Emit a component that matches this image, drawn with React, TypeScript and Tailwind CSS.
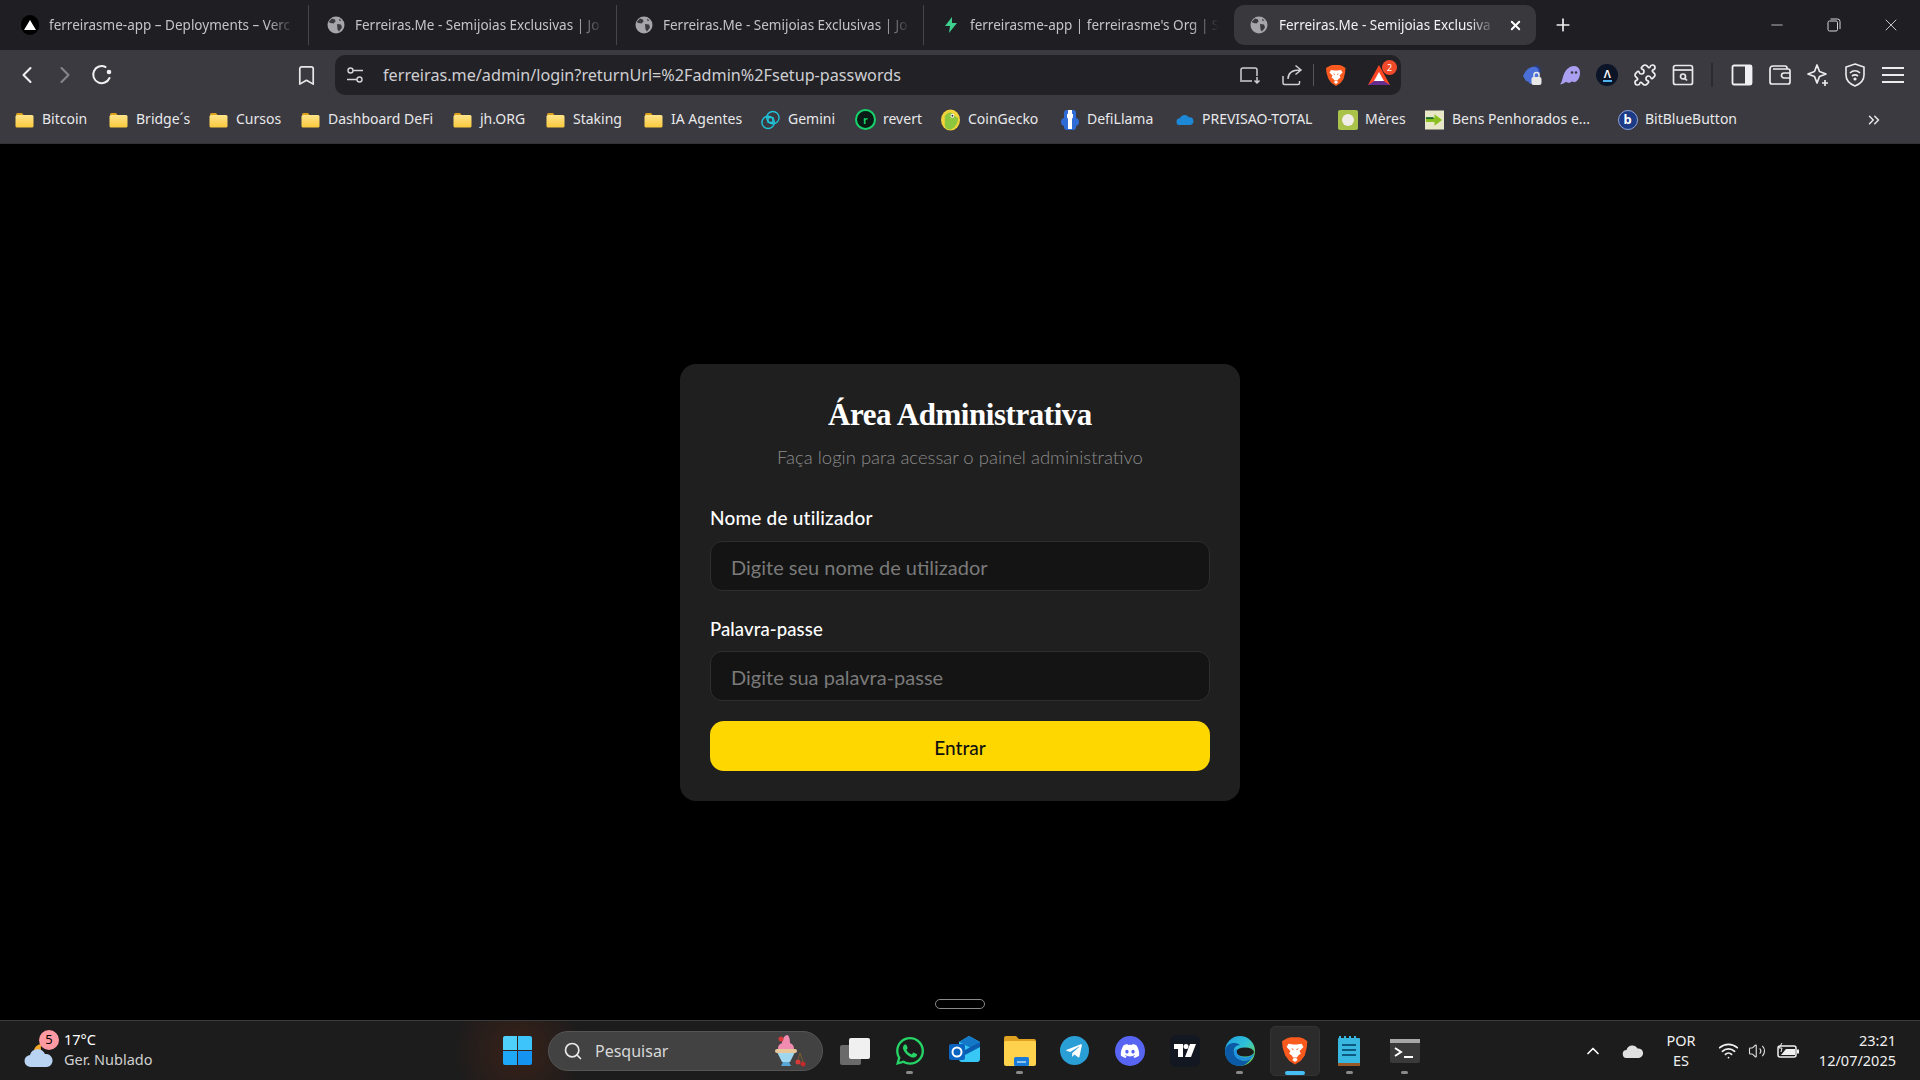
import React from "react";
import { FaWhatsapp, FaDiscord, FaTelegramPlane } from "react-icons/fa";
import { ChevronLeft, ChevronRight, Bookmark, Plus, X, Minus, Puzzle, ChevronUp, ChevronsRight, Search, Wifi, Volume2 } from "lucide-react";

const Globe = () => (
  <svg width="18" height="18" viewBox="0 0 18 18">
    <circle cx="9" cy="9" r="8.500" fill="#a6a6aa" />
    <path d="M5 2.500l3 1 .5 2-2 2-3-.5-2-1zM10 8l4 .5 1 3-3 4-1.500-2zM12 2.500l2.500 2-2 .5z" fill="#3a3a40" />
  </svg>
);
const Folder = () => (
  <svg width="19" height="16" viewBox="0 0 19 16">
    <defs>
      <linearGradient id="fg" x1="0" y1="0" x2="0" y2="1"><stop offset="0" stopColor="#ffe48a" /><stop offset="1" stopColor="#fac83c" /></linearGradient>
    </defs>
    <path d="M1 2.500A1.500 1.500 0 0 1 2.500 1h4.500l1.500 2H1z" fill="#dc9f1a" />
    <rect x="0.500" y="3" width="18" height="12.500" rx="1.500" fill="url(#fg)" />
  </svg>
);
const BraveLion = ({ s = 20 }: { s?: number }) => (
  <svg width={s} height={s * 1.15} viewBox="0 0 20 23">
    <path d="M3.500 2L6.500 1h7l3 1 3 2-.5 5-1.500 6-3 4-4.500 3-4.500-3-3-4L.5 9 0 4z" fill="#fb5a1f" />
    <path d="M5 6l3.500.5h3L15 6l1.500 2.500-3 3 1 2-2 1.500-1 1.500h-3L7.500 15l-2-1.500 1-2-3-3z" fill="#fff" />
    <path d="M9 17h2l1 1.500-2 1.500-2-1.500z" fill="#fff" />
    <path d="M7 9.500l2 .5-.5 1zM13 9.500l-2 .5.5 1z" fill="#fb5a1f" />
  </svg>
);
const BatToken = () => (
  <svg width="24" height="22" viewBox="0 0 24 22">
    <path d="M12 1l11 20H1z" fill="#ff4724" />
    <path d="M1 21l11-7 11 7z" fill="#662d91" />
    <path d="M12 8l5 9H7z" fill="#fff" />
  </svg>
);

const Tab = ({ icon, text, w, sep = true }: { icon: React.ReactNode; text: string; w: string; sep?: boolean }) => (
  <div className={`flex h-10 shrink-0 items-center ${w} ${sep ? "border-r border-[#45454a]" : ""}`}>
    <div className="flex w-[18px] shrink-0 items-center justify-center">{icon}</div>
    <span className="ml-[10px] flex-1 whitespace-nowrap text-[13.500px] text-[#c4c4c8] [mask-image:linear-gradient(to_right,black_88%,transparent)]">{text}</span>
    <div className="w-[12px] shrink-0" />
  </div>
);

const Slot = ({ children, w = "w-[37.700px]" }: { children: React.ReactNode; w?: string }) => (
  <div className={`flex shrink-0 items-center justify-center ${w}`}>{children}</div>
);

const BookmarkItem = ({ icon, text, w }: { icon: React.ReactNode; text: string; w: string }) => (
  <div className={`flex shrink-0 items-center ${w}`}>
    <div className="flex w-[19px] shrink-0 items-center justify-center">{icon}</div>
    <span className="ml-[8px] mt-[-2px] whitespace-nowrap text-[14px] text-[#e8e8ea]">{text}</span>
  </div>
);

const TaskSlot = ({ children, dot, active }: { children: React.ReactNode; dot?: boolean; active?: boolean }) => (
  <div className="relative flex h-[50px] w-[55px] shrink-0 items-center justify-center">
    {active && <div className="absolute left-[2.500px] top-0 h-[50px] w-[50px] rounded-[5px] border border-[#333] bg-[#2b2b2b]" />}
    <div className="relative">{children}</div>
    {dot && <div className="absolute bottom-[2px] left-[24px] h-[3px] w-[7px] rounded-full bg-[#8a8a8a]" />}
    {active && <div className="absolute bottom-[1px] left-[17.500px] h-[4px] w-[20px] rounded-full bg-[#47bdf5]" />}
  </div>
);

export default function App() {
  return (
    <div className="flex h-[1080px] w-[1920px] flex-col overflow-hidden bg-black font-['Noto_Sans',sans-serif]">
      {/* tab strip */}
      <div className="flex h-[50px] shrink-0 items-center bg-[#1e1e23] pl-[21px]">
        <Tab w="w-[288px]" text="ferreirasme-app – Deployments – Verc" icon={
          <div className="flex h-[20px] w-[20px] items-center justify-center rounded-full bg-black"><div className="h-0 w-0 border-x-[6px] border-b-[10px] border-x-transparent border-b-white" /></div>} />
        <div className="w-[18px]" />
        <Tab w="w-[290px]" text="Ferreiras.Me - Semijoias Exclusivas | Jo" icon={<Globe />} />
        <div className="w-[18px]" />
        <Tab w="w-[289px]" text="Ferreiras.Me - Semijoias Exclusivas | Jo" icon={<Globe />} />
        <div className="w-[18px]" />
        <Tab w="w-[288px]" sep={false} text="ferreirasme-app | ferreirasme's Org | S" icon={
          <svg width="18" height="18" viewBox="0 0 18 18"><path d="M10 1L3 10h5l-1 7 8-10h-5z" fill="#3ecf8e" /></svg>} />
        <div className="ml-[4px] flex h-10 w-[302px] shrink-0 items-center rounded-[10px] bg-[#38383d] pl-[16px]">
          <Globe />
          <span className="ml-[11px] w-[217px] whitespace-nowrap text-[13.500px] text-[#f2f2f4] [mask-image:linear-gradient(to_right,black_88%,transparent)]">Ferreiras.Me - Semijoias Exclusiva</span>
          <X size={15} strokeWidth={3} className="ml-[12px] text-white" />
        </div>
        <Plus size={20} strokeWidth={2} className="ml-[17px] text-[#f0f0f0]" />
        <div className="flex-1" />
        <Minus size={18} strokeWidth={1} className="mr-[41px] text-[#e8e8e8]" />
        <svg width="14" height="14" viewBox="0 0 14 14" fill="none" stroke="#d8d8d8" className="mr-[40px]"><rect x="1" y="3" width="9.500" height="10" rx="1.500" /><path d="M3.500 1h7A2.500 2.500 0 0 1 13 3.500V11" /></svg>
        <X size={20} strokeWidth={1} className="mr-[19px] text-[#e8e8e8]" />
      </div>

      {/* toolbar */}
      <div className="flex h-[50px] shrink-0 items-center bg-[#3a3a40] pl-[8px]">
        <Slot w="w-[38px]"><ChevronLeft size={28} strokeWidth={1.800} className="text-[#f0f0f2]" /></Slot>
        <Slot w="w-[38px]"><ChevronRight size={28} strokeWidth={1.800} className="text-[#86868a]" /></Slot>
        <Slot w="w-[36px]">
          <svg width="22" height="22" viewBox="0 0 22 22" fill="none" stroke="#f0f0f2" strokeWidth="2"><path d="M18.500 14A8.500 8.500 0 1 1 14.500 3" strokeLinecap="round" /><circle cx="18" cy="8" r="2.300" fill="#f0f0f2" stroke="none" /></svg>
        </Slot>
        <div className="ml-[168px]"><Slot w="w-[36px]"><Bookmark size={23} strokeWidth={1.800} className="text-[#e8e8ea]" /></Slot></div>
        <div className="ml-[11px] flex h-10 w-[1066px] shrink-0 items-center rounded-[10px] bg-[#222226] pl-[11px] pr-[10px]">
          <svg width="18" height="18" viewBox="0 0 18 18" fill="none" stroke="#d4d4d8" strokeWidth="1.400"><circle cx="4.500" cy="4.500" r="2.500" /><path d="M7 4.500h10M1 13.500h10" /><circle cx="13.500" cy="13.500" r="2.500" /></svg>
          <span className="ml-[19px] text-[16.200px] text-[#cfcfd3]">ferreiras.me/admin/login?returnUrl=%2Fadmin%2Fsetup-passwords</span>
          <div className="flex-1" />
          <svg width="22" height="20" viewBox="0 0 22 20" fill="none" stroke="#d0d0d4" strokeWidth="1.500" className="mr-[20px]"><path d="M2 15V5a2 2 0 0 1 2-2h12a2 2 0 0 1 2 2v6" /><path d="M1 16h12M18 12v6m-2.500-2.500L18 18l2.500-2.500" /></svg>
          <svg width="22" height="22" viewBox="0 0 22 22" fill="none" stroke="#d0d0d4" strokeWidth="1.500" className="mr-[10px]"><path d="M2 12v7a1.500 1.500 0 0 0 1.500 1.500H17a1.500 1.500 0 0 0 1.500-1.500v-2" /><path d="M7 15c0-6 4-9 12-9M14.500 1.500L20 6l-5.500 4.500" /></svg>
          <div className="h-[22px] w-px bg-[#55555a]" />
          <div className="ml-[12px]"><BraveLion s={20} /></div>
          <div className="relative ml-[21px]">
            <BatToken />
            <div className="absolute right-[-6px] top-[-4px] flex h-[15px] w-[15px] items-center justify-center rounded-full bg-[#f04a2a] text-[9px] text-white">2</div>
          </div>
        </div>
        <div className="ml-[112px] flex items-center">
          <Slot>
            <svg width="24" height="24" viewBox="0 0 24 24"><path d="M3 13c3-7 8-10 13-9 3 1 4 3 4 6l-4 9-6 2c-1-2-2-3-4-3z" fill="#4a6fd8" /><path d="M15 3c3 0 5 3 5 6" stroke="#2a3f8c" strokeWidth="2" fill="none" /><rect x="11.500" y="14" width="10" height="8" rx="2" fill="#e8e8e8" /><path d="M14 14v-2a2.500 2.500 0 0 1 5 0v2" stroke="#e8e8e8" strokeWidth="1.500" fill="none" /></svg>
          </Slot>
          <Slot>
            <svg width="22" height="20" viewBox="0 0 22 20"><path d="M1 19c2-1 2-5 4-10S11 1 15 1s6 3 6 7-2 8-5 9c-1 .5-2-.5-3-.5s-2 1.500-3 1.500-2-1-3-1-3 3-6 2z" fill="#ab9ff2" /><circle cx="13" cy="7.500" r="1.300" fill="#3a3a40" /><circle cx="17" cy="7.500" r="1.300" fill="#3a3a40" /></svg>
          </Slot>
          <Slot>
            <div className="flex h-[22px] w-[22px] flex-col items-center justify-center rounded-full bg-[#0c1428]">
              <span className="text-[11px] font-semibold leading-[12px] text-white">Λ</span>
              <div className="h-[1.500px] w-[9px] bg-[#4db4f0]" />
            </div>
          </Slot>
          <Slot><Puzzle size={24} strokeWidth={1.700} className="text-[#eeeeee]" /></Slot>
          <Slot>
            <svg width="22" height="22" viewBox="0 0 22 22" fill="none" stroke="#e8e8ea" strokeWidth="1.700"><rect x="1.500" y="1.500" width="19" height="19" rx="2" /><path d="M1.500 6h19" /><circle cx="11" cy="12.500" r="2.500" /><path d="M13 14.500l2 2" /></svg>
          </Slot>
          <div className="flex w-[22px] shrink-0 justify-center"><div className="h-[24px] w-[2px] bg-[#2c2c30]" /></div>
          <Slot>
            <svg width="22" height="22" viewBox="0 0 22 22"><rect x="1.500" y="1.500" width="19" height="19" rx="1.500" fill="none" stroke="#f0f0f2" strokeWidth="1.800" /><rect x="14" y="1.500" width="6.500" height="19" fill="#f0f0f2" /></svg>
          </Slot>
          <Slot>
            <svg width="22" height="20" viewBox="0 0 22 20" fill="none" stroke="#ececee" strokeWidth="1.700"><path d="M18 4V3a2 2 0 0 0-2-2H4a3 3 0 0 0-3 3v13a2 2 0 0 0 2 2h16a2 2 0 0 0 2-2V6a2 2 0 0 0-2-2H4" /><path d="M21 8h-6a2 2 0 0 0 0 5h6" /></svg>
          </Slot>
          <Slot>
            <svg width="24" height="24" viewBox="0 0 24 24" fill="none" stroke="#ececee" strokeWidth="1.700"><path d="M11 2l2.500 6.500L20 11l-6.500 2.500L11 20l-2.500-6.500L2 11l6.500-2.500z" strokeLinejoin="round" /><path d="M19 17v6M16 20h6" /></svg>
          </Slot>
          <Slot>
            <svg width="20" height="24" viewBox="0 0 20 24" fill="none" stroke="#ececee" strokeWidth="1.600"><path d="M10 1l9 3v8c0 5-4 9-9 11-5-2-9-6-9-11V4z" /><path d="M5 10c3-3 7-3 10 0M7 13c2-1.500 4-1.500 6 0" /><circle cx="10" cy="16" r=".8" fill="#ececee" /></svg>
          </Slot>
          <Slot>
            <svg width="22" height="18" viewBox="0 0 22 18" stroke="#ececee" strokeWidth="1.800"><path d="M0 2h22M0 9h22M0 16h22" /></svg>
          </Slot>
        </div>
      </div>

      {/* bookmarks */}
      <div className="flex h-[44px] shrink-0 items-center border-b border-[#333] bg-[#3a3a40] pb-[4px] pl-[15px]">
        <BookmarkItem w="w-[94px]" text="Bitcoin" icon={<Folder />} />
        <BookmarkItem w="w-[100px]" text="Bridge´s" icon={<Folder />} />
        <BookmarkItem w="w-[92px]" text="Cursos" icon={<Folder />} />
        <BookmarkItem w="w-[152px]" text="Dashboard DeFi" icon={<Folder />} />
        <BookmarkItem w="w-[93px]" text="jh.ORG" icon={<Folder />} />
        <BookmarkItem w="w-[98px]" text="Staking" icon={<Folder />} />
        <BookmarkItem w="w-[117px]" text="IA Agentes" icon={<Folder />} />
        <BookmarkItem w="w-[95px]" text="Gemini" icon={
          <svg width="22" height="22" viewBox="0 0 20 20" fill="none" stroke="#1fc4d8" strokeWidth="1.500"><circle cx="12.500" cy="7.500" r="6.500" /><circle cx="7.500" cy="12.500" r="6.500" /><rect x="7.500" y="7.500" width="5" height="5" /></svg>} />
        <BookmarkItem w="w-[85px]" text="revert" icon={
          <div className="flex h-[21px] w-[21px] shrink-0 items-center justify-center rounded-full border-2 border-[#16d36b] bg-[#0a1a14] text-[10px] font-bold leading-none text-[#16d36b]">r</div>} />
        <BookmarkItem w="w-[119px]" text="CoinGecko" icon={
          <svg width="20" height="22" viewBox="0 0 20 22"><ellipse cx="10" cy="11" rx="10" ry="11" fill="#f2d33a" /><path d="M4 7c3-5 8-5 9-1l5 3c0 6-4 12-9 12-3 0-5-2-5-5z" fill="#8dc63f" /><circle cx="12" cy="6.500" r="2" fill="#fff" /><circle cx="12" cy="6.500" r="1" fill="#333" /></svg>} />
        <BookmarkItem w="w-[115px]" text="DefiLlama" icon={
          <svg width="18" height="22" viewBox="0 0 18 22"><rect x="3" y="1" width="12" height="20" rx="3" fill="#2f6cd6" /><circle cx="4" cy="13" r="4" fill="#2f6cd6" /><circle cx="14" cy="13" r="4" fill="#2f6cd6" /><path d="M7 1v4H6v3l1 2v10h4V10l1-2V5h-1V1z" fill="#fff" /></svg>} />
        <BookmarkItem w="w-[163px]" text="PREVISAO-TOTAL" icon={
          <svg width="22" height="15" viewBox="0 0 22 15"><path d="M6 14a4 4 0 0 1-.5-8A6 6 0 0 1 16 5a4.500 4.500 0 0 1 1.500 9z" fill="#1e88d8" /></svg>} />
        <BookmarkItem w="w-[87px]" text="Mères" icon={
          <div className="flex h-[20px] w-[20px] shrink-0 items-center justify-center rounded-[2px] bg-[#a8c24a]"><div className="h-[12px] w-[12px] rounded-full bg-[#f0ece8]" /></div>} />
        <BookmarkItem w="w-[193px]" text="Bens Penhorados e..." icon={
          <svg width="20" height="20" viewBox="0 0 20 20"><rect width="20" height="20" fill="#e8e8c8" /><path d="M1 8h9V4l8 6-8 6v-4H1z" fill="#8cc020" /><path d="M1 8h8" stroke="#1a6a2a" strokeWidth="2" /></svg>} />
        <BookmarkItem w="w-[247px]" text="BitBlueButton" icon={
          <div className="flex h-[20px] w-[20px] shrink-0 items-center justify-center rounded-full border border-[#8ea4d8] bg-[#1c3a86] text-[13px] font-bold leading-none text-white">b</div>} />
        <ChevronsRight size={18} strokeWidth={2} className="text-[#e8e8ea]" />
      </div>

      {/* page */}
      <main className="relative flex flex-1 items-center justify-center bg-black">
        <div className="flex h-[437px] w-[560px] flex-col rounded-[16px] bg-[#1f1f1f] px-[30px] pt-[30px]">
          <h1 className="mt-[1px] text-center font-['Liberation_Serif',serif] text-[31px] font-bold leading-[40px] tracking-[-0.450px] text-white">Área Administrativa</h1>
          <p className="mt-[10px] text-center font-['Lato',sans-serif] text-[18.500px] font-light leading-[24px] text-[#8c8c8c]">Faça login para acessar o painel administrativo</p>
          <label className="mt-[37px] font-['Lato',sans-serif] text-[19px] font-medium leading-[24px] tracking-[0.2px] text-white">Nome de utilizador</label>
          <input readOnly placeholder="Digite seu nome de utilizador" className="mt-[11px] h-[50px] w-full rounded-[12px] border border-[#2e2e2e] bg-[#141414] px-[20px] pt-[3px] font-['Lato',sans-serif] text-[20px] text-white outline-none placeholder:text-[#7a7a7a]" />
          <label className="mt-[26px] font-['Lato',sans-serif] text-[18.500px] font-medium leading-[24px] tracking-[0.1px] text-white">Palavra-passe</label>
          <input readOnly placeholder="Digite sua palavra-passe" className="mt-[10px] h-[50px] w-full rounded-[12px] border border-[#2e2e2e] bg-[#141414] px-[20px] pt-[3px] font-['Lato',sans-serif] text-[20px] text-white outline-none placeholder:text-[#7a7a7a]" />
          <button className="mt-[20px] flex h-[50px] w-full items-center justify-center rounded-[14px] bg-[#ffd700] pt-[5px] font-['Lato',sans-serif] text-[19px] font-medium text-[#111]">Entrar</button>
        </div>
        <div className="absolute bottom-[11px] left-[935px] h-[10px] w-[50px] rounded-full border border-[#8a8a8a]" />
      </main>

      {/* taskbar */}
      <footer className="flex h-[60px] shrink-0 items-center border-t border-[#3c3c3c] bg-[#1c1c1c] bg-[radial-gradient(circle_at_518px_30px,#3a2118_0,#1c1c1c_65px)]">
        <div className="flex w-[490px] shrink-0 items-center pl-[24px]">
          <div className="relative h-[44px] w-[40px]">
            <svg width="32" height="32" viewBox="0 0 32 32" className="absolute bottom-[3px] left-0"><path d="M10 16a8 8 0 0 1 8-10 8 8 0 0 0 4 12z" fill="#f6a828" /><path d="M7 29a6 6 0 0 1-1-12 8 8 0 0 1 15-1 6.500 6.500 0 0 1 2 13z" fill="#b8d4f2" /></svg>
            <div className="absolute left-[15px] top-[1px] flex h-[20px] w-[20px] items-center justify-center rounded-full bg-[#ff9aa2] text-[13px] leading-none text-black">5</div>
          </div>
          <div className="mt-[-4px] flex flex-col text-[14.500px] leading-[20px]">
            <span className="text-white">17°C</span>
            <span className="text-[#d0d0d0]">Ger. Nublado</span>
          </div>
        </div>
        <div className="flex w-[55px] shrink-0 items-center justify-center">
          <div className="grid h-[29px] w-[29px] grid-cols-2 gap-[1.500px]">
            <div className="rounded-tl-[2px] bg-[#4fd0fb]" /><div className="rounded-tr-[2px] bg-[#3cc4fb]" />
            <div className="rounded-bl-[2px] bg-[#1fa8f5]" /><div className="rounded-br-[2px] bg-[#1494f0]" />
          </div>
        </div>
        <div className="ml-[3px] flex h-10 w-[275px] shrink-0 items-center rounded-full border border-[#555] bg-[#424242] pl-[14px]">
          <Search size={20} strokeWidth={2} className="text-[#e8e8e8]" />
          <span className="ml-[12px] flex-1 text-[16px] text-[#d8d8d8]">Pesquisar</span>
          <svg width="36" height="36" viewBox="0 0 36 36" className="mr-[16px]"><path d="M7 19h18l-5 10h-8z" fill="#9fd8ee" /><path d="M13 29h6l2 4H11z" fill="#5aa8d8" /><rect x="5" y="16" width="22" height="4" rx="2" fill="#e8c89a" /><path d="M8 16c0-4 2-5 4-6 0-4 3-8 5-8s3 4 3 8c2 1 4 2 4 6z" fill="#f08cb0" /><circle cx="11" cy="6" r="2.500" fill="#d83a3a" /><circle cx="28" cy="29" r="2.500" fill="#d83a3a" /><circle cx="33" cy="31" r="2.500" fill="#c02a2a" /><path d="M28 27l2-7 3 9" stroke="#7a5a2a" fill="none" /></svg>
        </div>
        <div className="ml-[4px] flex items-center">
          <TaskSlot>
            <svg width="32" height="30" viewBox="0 0 32 30"><rect x="1" y="9" width="21" height="20" rx="2" fill="#6a6a6a" /><rect x="10" y="2" width="21" height="21" rx="2" fill="#f0f0f0" /></svg>
          </TaskSlot>
          <TaskSlot dot><FaWhatsapp size={32} className="text-[#25d366]" /></TaskSlot>
          <TaskSlot>
            <svg width="32" height="30" viewBox="0 0 32 30"><path d="M10 6l10-6 11 6v17a3 3 0 0 1-3 3H13a3 3 0 0 1-3-3z" fill="#38c8f5" /><path d="M10 6l10-6 11 6-9 6z" fill="#1478c8" /><path d="M16 14l15-8v5l-15 8z" fill="#0a5cb0" /><rect x="0" y="8" width="16" height="16" rx="2" fill="#0a64c0" /><circle cx="8" cy="16" r="4.500" fill="none" stroke="#fff" strokeWidth="2" /></svg>
          </TaskSlot>
          <TaskSlot dot>
            <svg width="32" height="30" viewBox="0 0 32 30"><path d="M0 2a2 2 0 0 1 2-2h10l3 3h15a2 2 0 0 1 2 2v3H0z" fill="#e0a020" /><rect y="5" width="32" height="25" rx="2" fill="#ffd24d" /><rect x="10" y="21" width="15" height="9" rx="1.500" fill="#1a7ad8" /><rect x="13" y="25" width="9" height="2" fill="#8cc4f0" /></svg>
          </TaskSlot>
          <TaskSlot>
            <div className="flex h-[29px] w-[29px] items-center justify-center rounded-full bg-[#2a9fd6]"><FaTelegramPlane size={18} className="mr-[2px] text-white" /></div>
          </TaskSlot>
          <TaskSlot>
            <div className="flex h-[30px] w-[30px] items-center justify-center rounded-full bg-[#5865f2]"><FaDiscord size={20} className="text-white" /></div>
          </TaskSlot>
          <TaskSlot>
            <div className="flex h-[32px] w-[30px] items-center justify-center rounded-[6px] bg-[#131722]">
              <svg width="22" height="13" viewBox="0 0 22 13" fill="#fff"><path d="M0 0h9v13H4V5H0z" /><circle cx="12" cy="2.500" r="2.500" /><path d="M16 0h6l-5 13h-6z" /></svg>
            </div>
          </TaskSlot>
          <TaskSlot dot>
            <svg width="30" height="30" viewBox="0 0 30 30"><defs><linearGradient id="eg" x1="0" y1="0" x2="1" y2="0.800"><stop offset="0" stopColor="#1f9fe0" /><stop offset="0.550" stopColor="#2fc0d8" /><stop offset="1" stopColor="#6fd84e" /></linearGradient></defs><circle cx="15" cy="15" r="15" fill="url(#eg)" /><ellipse cx="20" cy="16" rx="9" ry="4.500" fill="#1c1c1c" /><path d="M0 15C1 7 10 5 15 9c-4 0-7 3-6 8 1 6 9 10 17 6-3 4-7 7-11 7C6 30 0 24 0 15z" fill="#0c5aa6" /><path d="M9 17c1 6 9 10 17 6 2-2 3-4 3-5-4 3-9 4-12 3-4-1-6-4-5-8-2 0-3 2-3 4z" fill="#1f8fe0" /></svg>
          </TaskSlot>
          <TaskSlot active><BraveLion s={26} /></TaskSlot>
          <TaskSlot dot>
            <svg width="24" height="30" viewBox="0 0 24 30"><rect y="2" width="22" height="28" rx="1" fill="#38b8e0" /><rect y="27" width="22" height="3" fill="#9a5a28" /><path d="M4 9h14M4 14h14M4 19h14" stroke="#0c5a80" strokeWidth="2" /><path d="M2 0v4M7 0v4M12 0v4M17 0v4" stroke="#38b8e0" strokeWidth="2" /></svg>
          </TaskSlot>
          <TaskSlot dot>
            <svg width="30" height="24" viewBox="0 0 30 24"><rect width="30" height="24" rx="2" fill="#3a3a3a" /><rect width="30" height="4" fill="#a8a8a8" /><path d="M5 9l6 4-6 4" stroke="#fff" strokeWidth="2" fill="none" /><path d="M14 18h9" stroke="#fff" strokeWidth="2" /></svg>
          </TaskSlot>
        </div>
        <div className="flex-1" />
        <div className="flex items-center pr-[24px] text-[14.500px] text-[#f0f0f0]">
          <Slot w="w-10"><ChevronUp size={20} strokeWidth={2} className="text-white" /></Slot>
          <Slot w="w-10">
            <svg width="22" height="14" viewBox="0 0 22 14"><path d="M5 14a4 4 0 0 1-.5-8A6 6 0 0 1 15.500 4.500 4.500 4.500 0 0 1 17 14z" fill="#e0e0e0" /></svg>
          </Slot>
          <div className="mt-[-2px] flex w-14 shrink-0 flex-col items-center leading-[20px]"><span>POR</span><span>ES</span></div>
          <Slot w="w-[38px]"><Wifi size={21} strokeWidth={2} className="text-[#f0f0f0]" /></Slot>
          <Slot w="w-5"><Volume2 size={18} strokeWidth={1.500} className="text-[#e0e0e0]" /></Slot>
          <Slot w="w-[42px]">
            <svg width="22" height="16" viewBox="0 0 22 16" fill="none"><rect x="1" y="3" width="18" height="11" rx="2" stroke="#f0f0f0" strokeWidth="1.500" /><path d="M4 12l5-6h9v6z" fill="#f0f0f0" /><rect x="20" y="6.500" width="2" height="4" fill="#f0f0f0" /><path d="M5 0L2 5h3L4 9" stroke="#f0f0f0" /></svg>
          </Slot>
          <div className="mt-[-2px] flex w-[87px] shrink-0 flex-col items-end leading-[20px]"><span>23:21</span><span>12/07/2025</span></div>
        </div>
      </footer>
    </div>
  );
}
